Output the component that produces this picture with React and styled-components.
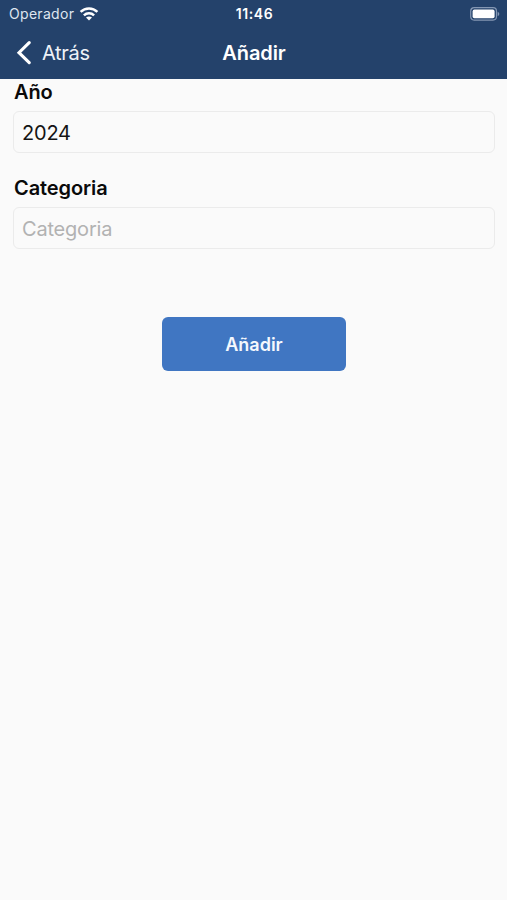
import { useState } from 'react';
import styled, { createGlobalStyle } from 'styled-components';

const GlobalStyle = createGlobalStyle`
  * {
    box-sizing: border-box;
  }
  body {
    margin: 0;
    background-color: #fafafa;
    font-family: Inter, 'Liberation Sans', sans-serif;
  }
`;

const Screen = styled.div`
  display: flex;
  flex-direction: column;
  height: 900px;
  background-color: #fafafa;
`;

const Header = styled.header`
  height: 79px;
  background-color: #24426b;
  color: #fff;
`;

const StatusBar = styled.div`
  display: grid;
  grid-template-columns: 1fr auto 1fr;
  align-items: center;
  height: 27px;
  padding: 0 7px 0 9px;
`;

const Carrier = styled.div`
  display: flex;
  align-items: center;
  gap: 5px;
  font-size: 14px;
  line-height: 27px;
  letter-spacing: 0.3px;
  color: #dfe6f0;
`;

const Clock = styled.div`
  font-size: 14px;
  font-weight: 600;
  letter-spacing: 0.6px;
`;

const BatterySlot = styled.div`
  display: flex;
  justify-content: flex-end;
`;

const NavBar = styled.nav`
  display: grid;
  grid-template-columns: 1fr auto 1fr;
  align-items: center;
  height: 51px;
  padding: 0 16px;
`;

const BackButton = styled.button`
  display: flex;
  align-items: center;
  gap: 10px;
  padding: 0;
  border: none;
  background: none;
  color: #eef2f8;
  font-family: inherit;
  font-size: 20px;
  letter-spacing: -0.3px;
`;

const Title = styled.h1`
  margin: 0;
  padding-left: 1px;
  font-size: 20px;
  font-weight: 600;
  letter-spacing: -0.1px;
`;

const Form = styled.form`
  display: flex;
  flex-direction: column;
  padding: 0 12px 0 13px;
`;

const Field = styled.div`
  display: flex;
  flex-direction: column;
  margin-bottom: 22px;
`;

const Label = styled.label`
  height: 32px;
  padding-left: 1px;
  font-size: 20px;
  font-weight: 600;
  line-height: 26px;
  letter-spacing: -0.1px;
  color: #0a0a0a;
`;

const Input = styled.input`
  height: 42px;
  padding: 1px 8px 0;
  border: 1px solid #ebebeb;
  border-radius: 6px;
  background-color: #fafafa;
  color: #141414;
  font-family: inherit;
  font-size: 20px;
  letter-spacing: -0.2px;
  outline: none;

  &::placeholder {
    color: #b2b2b2;
    opacity: 1;
  }
`;

const SubmitButton = styled.button`
  align-self: center;
  width: 184px;
  height: 54px;
  margin-top: 46px;
  padding: 0;
  border: none;
  border-radius: 6px;
  background-color: #4076c2;
  color: #f5f8fd;
  font-family: inherit;
  font-size: 18px;
  font-weight: 600;
`;

const WifiIcon = () => (
  <svg width="20" height="14" viewBox="0 0 20 14" fill="none" stroke="#fff" strokeWidth="2.5">
    <path d="M1.6 4.9C6.3.3 13.7.3 18.4 4.9" />
    <path d="M4.9 8.3C7.8 5.5 12.2 5.5 15.1 8.3" />
    <path d="M10 13.6L7 10.6C8.7 9.1 11.3 9.1 13 10.6Z" fill="#fff" stroke="none" />
  </svg>
);

const BatteryIcon = () => (
  <svg width="30" height="14" viewBox="0 0 30 14">
    <rect x="0.7" y="0.7" width="25.8" height="12.4" rx="3.5" fill="none" stroke="#8497b3" strokeWidth="1.2" />
    <rect x="2.6" y="2.6" width="22" height="8.6" rx="1.8" fill="#fff" />
    <path d="M27.7 4.7C29.8 5.5 29.8 8.3 27.7 9.1Z" fill="#8497b3" />
  </svg>
);

const BackIcon = () => (
  <svg width="16" height="24" viewBox="0 0 16 24" fill="none" stroke="#fff" strokeWidth="3.1">
    <path d="M13.2 1.7L3 11.7L13.2 21.7" strokeLinecap="round" strokeLinejoin="miter" />
  </svg>
);

export default function App() {
  const [year, setYear] = useState('2024');
  const [category, setCategory] = useState('');

  return (
    <Screen>
      <GlobalStyle />
      <Header>
        <StatusBar>
          <Carrier>
            Operador
            <WifiIcon />
          </Carrier>
          <Clock>11:46</Clock>
          <BatterySlot>
            <BatteryIcon />
          </BatterySlot>
        </StatusBar>
        <NavBar>
          <BackButton type="button">
            <BackIcon />
            Atrás
          </BackButton>
          <Title>Añadir</Title>
        </NavBar>
      </Header>
      <Form onSubmit={(e) => e.preventDefault()}>
        <Field>
          <Label htmlFor="year">Año</Label>
          <Input id="year" value={year} onChange={(e) => setYear(e.target.value)} />
        </Field>
        <Field>
          <Label htmlFor="category">Categoria</Label>
          <Input
            id="category"
            placeholder="Categoria"
            value={category}
            onChange={(e) => setCategory(e.target.value)}
          />
        </Field>
        <SubmitButton type="submit">Añadir</SubmitButton>
      </Form>
    </Screen>
  );
}
